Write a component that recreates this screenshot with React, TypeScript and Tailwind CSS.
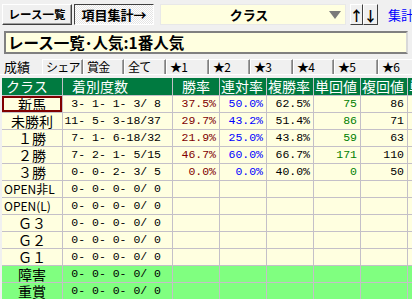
import { ReactNode } from "react";

type Row = {
  name: string;
  align?: "left" | "center";
  counts: string;
  win?: string;
  ren?: string;
  fuku?: string;
  tan?: string;
  fukuVal?: string;
  green?: boolean;
};

const rows: Row[] = [
  { name: "新馬", counts: "3- 1- 1- 3/ 8", win: "37.5%", ren: "50.0%", fuku: "62.5%", tan: "75", fukuVal: "86" },
  { name: "未勝利", counts: "11- 5- 3-18/37", win: "29.7%", ren: "43.2%", fuku: "51.4%", tan: "86", fukuVal: "71" },
  { name: "１勝", counts: "7- 1- 6-18/32", win: "21.9%", ren: "25.0%", fuku: "43.8%", tan: "59", fukuVal: "63" },
  { name: "２勝", counts: "7- 2- 1- 5/15", win: "46.7%", ren: "60.0%", fuku: "66.7%", tan: "171", fukuVal: "110" },
  { name: "３勝", counts: "0- 0- 2- 3/ 5", win: "0.0%", ren: "0.0%", fuku: "40.0%", tan: "0", fukuVal: "50" },
  { name: "OPEN非L", align: "left", counts: "0- 0- 0- 0/ 0" },
  { name: "OPEN(L)", align: "left", counts: "0- 0- 0- 0/ 0" },
  { name: "Ｇ３", counts: "0- 0- 0- 0/ 0" },
  { name: "Ｇ２", counts: "0- 0- 0- 0/ 0" },
  { name: "Ｇ１", counts: "0- 0- 0- 0/ 0" },
  { name: "障害", counts: "0- 0- 0- 0/ 0", green: true },
  { name: "重賞", counts: "0- 0- 0- 0/ 0", green: true },
];

const tabs = ["シェア", "賞金", "全て", "★1", "★2", "★3", "★4", "★5", "★6"];
const tabWidths = ["w-[41px]", "w-[41px]", "w-[42px]", "w-[43px]", "w-[41px]", "w-[43px]", "w-[41px]", "w-[44px]", "w-[44px]"];

const jp = "font-['Noto_Sans_CJK_JP',sans-serif]";
const mono = "font-['Liberation_Mono','Noto_Sans_CJK_JP',monospace]";

function Num({ children, color, bg }: { children?: ReactNode; color: string; bg: string }) {
  return (
    <div className={`overflow-hidden pr-[3px] text-right text-[11.5px] leading-[16px] ${mono} ${color} ${bg}`}>
      {children}
    </div>
  );
}

export default function App() {
  return (
    <div className={`h-[299px] w-[412px] overflow-hidden bg-[#f0f0f0] leading-none text-black ${jp}`}>
      {/* toolbar */}
      <div className="flex h-[29px] items-start gap-[2px] overflow-hidden px-[2px] pt-[4px]">
        <button className="flex h-[21px] w-[70px] shrink-0 items-center justify-center whitespace-nowrap border border-t-white border-l-white border-r-[#404040] border-b-[#404040] bg-[#f0f0f0] text-[11.5px] font-bold leading-none shadow-[inset_-1px_-1px_0_#a0a0a0]">
          レース一覧
        </button>
        <button className="flex h-[21px] w-[80px] shrink-0 items-center justify-center whitespace-nowrap border border-t-[#404040] border-l-[#404040] border-r-white border-b-white bg-[repeating-conic-gradient(#ffffff_0_25%,#e4e4e4_0_50%)] bg-[length:2px_2px] text-[13px] font-bold leading-none">
          項目集計→
        </button>
        <div className="ml-[4px] flex h-[21px] w-[186px] shrink-0 items-center border border-[#e8e8e8] bg-[#ffffe0]">
          <span className="flex-1 pl-[8px] text-center text-[13px] font-bold leading-none">クラス</span>
          <svg width="12" height="8" viewBox="0 0 12 8" className="mr-[4px]">
            <polygon points="0,0 12,0 6,8" fill="#7a7a7a" />
          </svg>
        </div>
        <div className="ml-[2px] flex shrink-0">
          <button className="flex h-[21px] w-[13px] items-center justify-center border border-t-white border-l-white border-r-[#404040] border-b-[#404040] bg-[#f0f0f0] text-[14px] font-bold leading-none">
            ↑
          </button>
          <button className="flex h-[21px] w-[15px] items-center justify-center border border-t-white border-l-white border-r-[#404040] border-b-[#404040] bg-[#f0f0f0] text-[14px] font-bold leading-none">
            ↓
          </button>
        </div>
        <span className="ml-[8px] mt-[4px] shrink-0 whitespace-nowrap text-[13px] leading-none text-[#0000ff]">集計モ</span>
      </div>

      {/* title */}
      <div className="mx-[4px] mt-[2px] flex h-[23px] items-center border-2 border-[#808080] border-r-[#d8d8d8] bg-[#ffffe0] pl-[2px]">
        <span className="text-[15.5px] font-bold leading-none">レース一覧･人気:1番人気</span>
      </div>

      {/* tabs */}
      <div className="mt-[3px] flex h-[17px] items-end whitespace-nowrap text-[12px] leading-none">
        <div className="flex h-[17px] w-[42px] shrink-0 items-center bg-[#f0f0f0] pl-[4px] pt-[1px] text-[13px]">成績</div>
        {tabs.map((t, i) => (
          <div
            key={t}
            className={`flex h-[15px] shrink-0 items-center overflow-hidden border-t border-l border-r border-t-white border-l-white border-r-[#808080] bg-[#f0f0f0] pl-[3px] tracking-[-0.8px] shadow-[inset_-1px_0_0_#a0a0a0] ${tabWidths[i]}`}
          >
            {t}
          </div>
        ))}
      </div>
      <div className="h-px w-full bg-white" />

      {/* table */}
      <div className="ml-[2px] mt-[3px] grid w-[420px] grid-cols-[60px_109px_46px_46px_46px_46px_46px_60px] grid-rows-[17px] auto-rows-[16px] gap-px bg-[#c4c0c8] pb-px">
        {["クラス", "着別度数", "勝率", "連対率", "複勝率", "単回値", "複回値", "単勝"].map((h, i) => (
          <div
            key={h}
            className={`overflow-hidden whitespace-nowrap bg-[#007a40] text-[14px] leading-[17px] text-white ${
              i === 0 ? "pl-[4px]" : i === 1 ? "pl-[9px]" : i === 2 ? "text-center" : "pl-[1px]"
            }`}
          >
            {h}
          </div>
        ))}
        {rows.map((r, idx) => {
          const bg = r.green ? "bg-[#80ff80]" : "bg-[#ffffe0]";
          return [
            <div
              key={r.name + "n"}
              className={`overflow-hidden whitespace-nowrap ${bg} ${
                r.align === "left" ? "pl-[2px] text-left text-[12px]" : "text-center text-[14px]"
              } ${idx === 0 ? "border-2 border-[#800000] leading-[12px]" : "leading-[16px]"}`}
            >
              {r.name}
            </div>,
            <div
              key={r.name + "c"}
              className={`overflow-hidden whitespace-pre pr-[11px] text-right text-[11.5px] leading-[16px] ${mono} ${bg}`}
            >
              {r.counts}
            </div>,
            <Num key={r.name + "1"} bg={bg} color="text-[#800000]">{r.win}</Num>,
            <Num key={r.name + "2"} bg={bg} color="text-[#0000ff]">{r.ren}</Num>,
            <Num key={r.name + "3"} bg={bg} color="text-black">{r.fuku}</Num>,
            <Num key={r.name + "4"} bg={bg} color="text-[#008000]">{r.tan}</Num>,
            <Num key={r.name + "5"} bg={bg} color="text-black">{r.fukuVal}</Num>,
            <div key={r.name + "6"} className={bg} />,
          ];
        })}
      </div>
    </div>
  );
}
